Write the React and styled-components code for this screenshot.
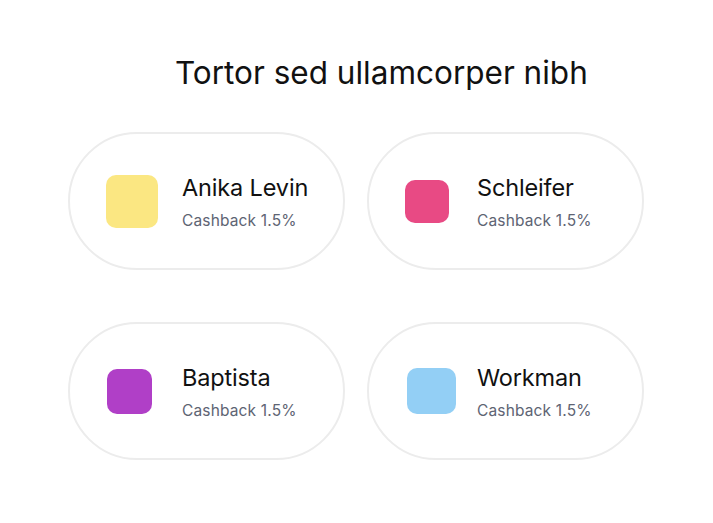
import styled, { createGlobalStyle } from "styled-components";

const GlobalStyle = createGlobalStyle`
  html, body {
    margin: 0;
    padding: 0;
    background: #ffffff;
  }
  body {
    font-family: "Inter", "Liberation Sans", sans-serif;
  }
`;

const Page = styled.div`
  width: 713px;
  min-height: 523px;
  padding-top: 55px;
  box-sizing: border-box;
`;

const Title = styled.h1`
  margin: 0 0 41px 175px;
  font-family: "Inter", "Liberation Sans", sans-serif;
  font-weight: 400;
  font-size: 31.5px;
  line-height: 36px;
  letter-spacing: 0;
  color: #111111;
`;

const Grid = styled.div`
  display: grid;
  grid-template-columns: 277px 277px;
  column-gap: 22px;
  row-gap: 52px;
  justify-content: center;
  padding-right: 1px;
`;

const Card = styled.div`
  box-sizing: border-box;
  height: 138px;
  display: flex;
  align-items: center;
  padding-left: ${(p) => p.$pad}px;
  gap: ${(p) => p.$gap}px;
  border: 2px solid #ececec;
  border-radius: 69px;
  background: #ffffff;
`;

const Tile = styled.div`
  flex: none;
  width: ${(p) => p.$w}px;
  height: ${(p) => p.$h}px;
  border-radius: 10px;
  background: ${(p) => p.$color};
`;

const Info = styled.div`
  display: flex;
  flex-direction: column;
  gap: 10px;
  padding-top: 2px;
`;

const Name = styled.div`
  font-size: 23.5px;
  line-height: 28px;
  letter-spacing: -0.15px;
  color: #111111;
`;

const Sub = styled.div`
  font-size: 15.5px;
  line-height: 18px;
  letter-spacing: 0.15px;
  color: #5e6473;
`;

const shops = [
  { name: "Anika Levin", color: "#fbe782", w: 52, h: 53, pad: 36, gap: 24 },
  { name: "Schleifer", color: "#e84a84", w: 44, h: 43, pad: 36, gap: 28 },
  { name: "Baptista", color: "#b03fc7", w: 45, h: 45, pad: 37, gap: 30 },
  { name: "Workman", color: "#93cff5", w: 49, h: 46, pad: 38, gap: 21 },
];

export default function App() {
  return (
    <Page>
      <GlobalStyle />
      <Title>Tortor sed ullamcorper nibh</Title>
      <Grid>
        {shops.map((s) => (
          <Card key={s.name} $pad={s.pad} $gap={s.gap}>
            <Tile $w={s.w} $h={s.h} $color={s.color} />
            <Info>
              <Name>{s.name}</Name>
              <Sub>Cashback 1.5%</Sub>
            </Info>
          </Card>
        ))}
      </Grid>
    </Page>
  );
}
